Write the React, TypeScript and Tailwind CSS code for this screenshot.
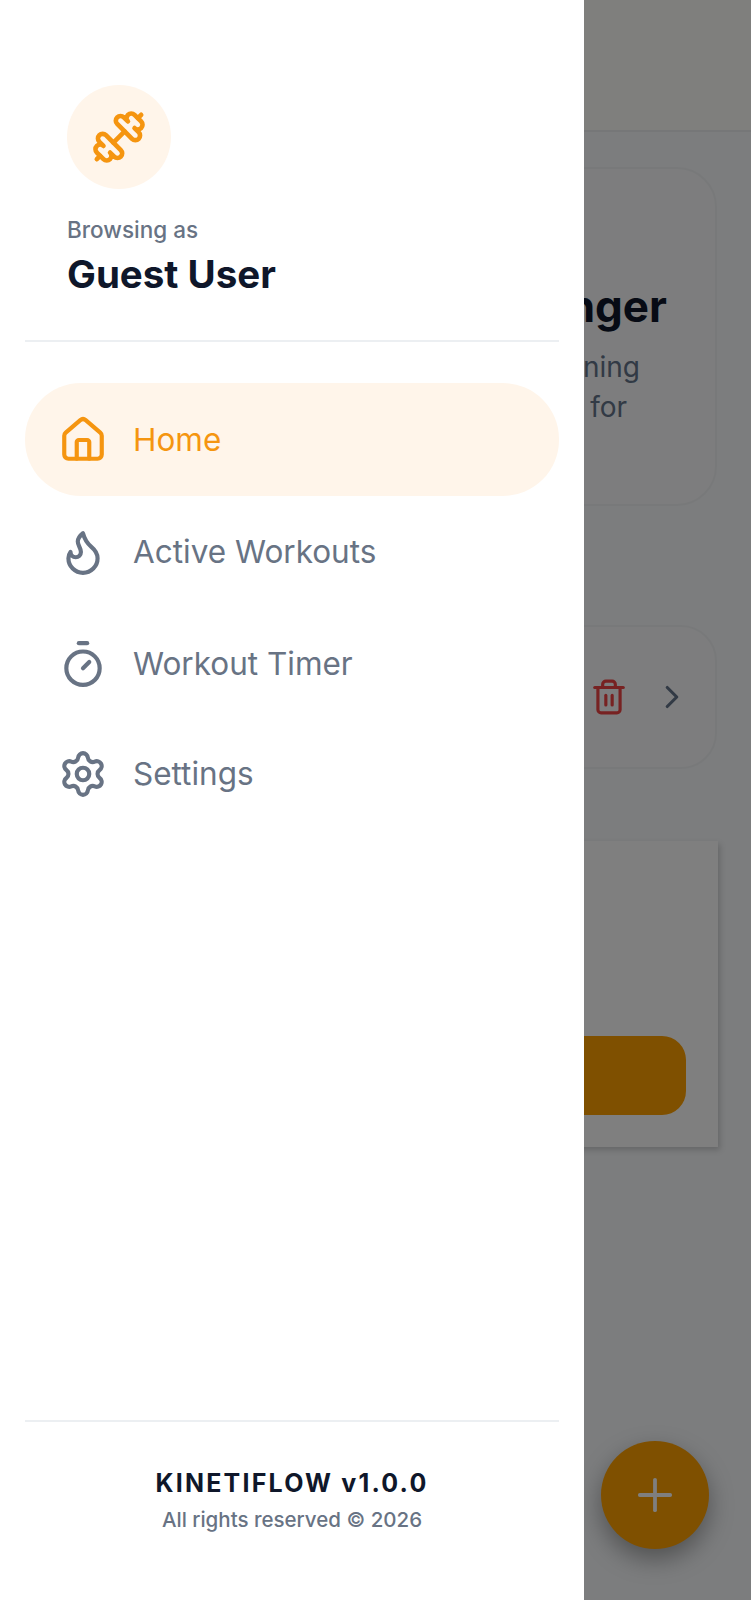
import { ChevronRight, Dumbbell, Flame, House, Plus, Settings, Timer, Trash2 } from "lucide-react";

const navItems = [
  { label: "Home", icon: House, active: true },
  { label: "Active Workouts", icon: Flame, active: false },
  { label: "Workout Timer", icon: Timer, active: false },
  { label: "Settings", icon: Settings, active: false },
];

function Background() {
  return (
    <div className="flex h-full flex-col bg-[#f8fafc]">
      <div className="h-[132px] border-b-2 border-[#eceef0] bg-[#fffefb]" />

      {/* Hero card */}
      <div className="mt-[35px] mr-[34px] ml-[35px] flex h-[339px] flex-col items-end rounded-[40px] border-2 border-[#f1f3f5] bg-[#fafbfc] pt-[112px]">
        <h2 className="pr-[48px] text-[44px] leading-[50px] font-bold text-[#0f172a]">Stronger</h2>
        <p className="mt-[16px] pr-[75px] text-[28px] leading-[40px] text-[#64748b]">training</p>
        <p className="pr-[88px] text-[28px] leading-[40px] text-[#64748b]">for</p>
      </div>

      {/* Saved workout row */}
      <div className="mt-[119px] mr-[34px] ml-[35px] flex h-[144px] items-center justify-end gap-[25px] rounded-[36px] border-2 border-[#f1f3f5] bg-[#fafbfc] pr-[24px]">
        <Trash2 size={38} strokeWidth={2} className="text-[#ef4444]" />
        <ChevronRight size={38} strokeWidth={2} className="text-[#64748b]" />
      </div>

      {/* Empty state card */}
      <div className="mt-[72px] mr-[33px] ml-[34px] flex h-[306px] flex-col justify-end bg-white pr-[32px] pb-[32px] pl-[30px] shadow-[2px_3px_6px_rgba(0,0,0,0.18)]">
        <div className="h-[79px] rounded-[24px] bg-[#ffa000]" />
      </div>
    </div>
  );
}

export default function App() {
  return (
    <div className="relative h-[1600px] w-[751px] overflow-hidden font-['Inter',sans-serif]">
      <Background />

      <button className="absolute right-[42px] bottom-[51px] flex h-[108px] w-[108px] items-center justify-center rounded-full bg-[#ffa000] shadow-[0_10px_24px_rgba(0,0,0,0.35)]">
        <Plus size={52} strokeWidth={1.75} className="text-white" />
      </button>

      <div className="absolute inset-0 bg-black/50" />

      {/* Drawer */}
      <aside className="absolute top-0 bottom-0 left-0 flex w-[584px] flex-col bg-white px-[25px]">
        <div className="flex h-[342px] flex-col border-b-2 border-[#eceff2] pt-[85px] pl-[42px]">
          <div className="flex h-[104px] w-[104px] items-center justify-center rounded-full bg-[#fff5ea]">
            <Dumbbell size={56} strokeWidth={2} className="text-[#f59510]" />
          </div>
          <p className="mt-[26px] text-[22.5px] leading-[30px] font-medium text-[#687384]">Browsing as</p>
          <p className="mt-[5px] text-[38.5px] leading-[48px] font-bold text-[#0f172a]">Guest User</p>
        </div>

        <nav className="mt-[41px] flex flex-col">
          {navItems.map((item) => {
            const Icon = item.icon;
            return (
              <div
                key={item.label}
                className={
                  item.active
                    ? "flex h-[113px] items-center gap-[25px] rounded-[56px] bg-[#fff5ea] pl-[33px] text-[#f59510]"
                    : "flex h-[112px] items-center gap-[25px] pl-[33px] text-[#687384] last:h-[108px]"
                }
              >
                <Icon size={50} strokeWidth={2} />
                <span className="text-[31.5px] leading-[40px] font-normal">{item.label}</span>
              </div>
            );
          })}
        </nav>

        <div className="mt-auto flex h-[180px] flex-col items-center border-t-2 border-[#eceff2] pt-[46px]">
          <p className="text-[25px] leading-[30px] font-bold tracking-[2.2px] text-[#0f172a]">KINETIFLOW v1.0.0</p>
          <p className="mt-[8px] text-[20.5px] leading-[28px] font-medium text-[#687384]">All rights reserved © 2026</p>
        </div>
      </aside>
    </div>
  );
}
